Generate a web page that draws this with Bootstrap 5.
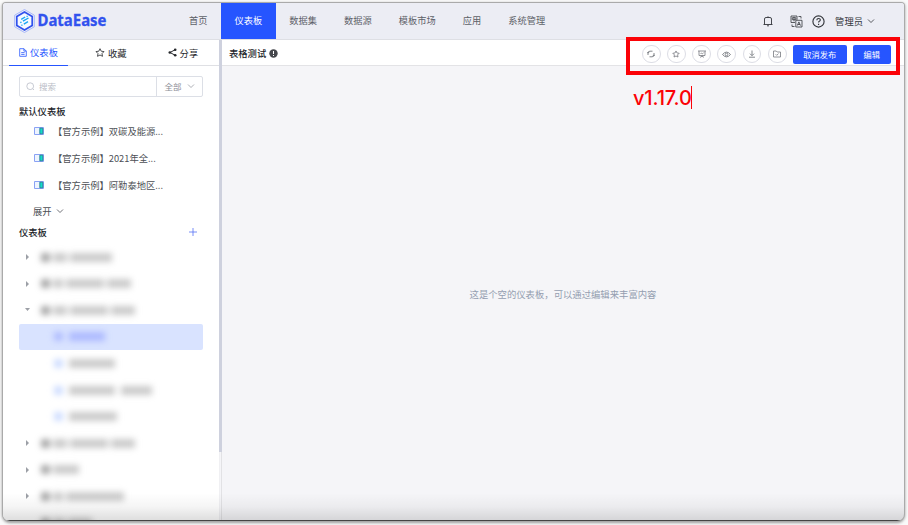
<!DOCTYPE html>
<html lang="en">
<head>
<meta charset="utf-8">
<title>DataEase</title>
<link rel="stylesheet" href="https://cdn.jsdelivr.net/npm/bootstrap@5.3.0/dist/css/bootstrap.min.css">
<style>
body{height:525px;overflow:hidden;background:#fafafa;padding:3px 4px 4px 3px;font:9.3px/14px "Noto Sans CJK SC",sans-serif;color:#4c4f55}
svg{display:block;flex:none;fill:none;stroke:currentColor}
.window{height:518px;border-radius:3px 3px 7px 7px;box-shadow:0 0 0 1px #aaa,0 1px 3px 1px #999;overflow:hidden;background:#f5f5f8}
.window::after{content:"";position:absolute;left:0;right:0;bottom:0;height:28px;background:linear-gradient(transparent,rgba(0,0,0,.04) 50%,rgba(0,0,0,.13));border-bottom:1px solid #444}
.topbar{height:37px;background:#ecedf4;border-bottom:1px solid #dedfe4}
.brand{width:180px;padding-left:11px}
.brand svg{overflow:visible}
.topbar .nav{margin-left:-7.5px}
.topbar .nav-link{padding:0 13.55px;height:36px;line-height:35px;color:#5d6168;font-size:9.23px;border-radius:0}
.topbar .nav-link.active{background:#2655ff;color:#fff}
.tools{color:#33363b;padding-right:29px}
.side{width:219px;background:#fff;border-right:3px solid #ced1de}
.side-tail{position:absolute;right:-3px;top:412px;bottom:0;width:3px;background:#f5f5f8;border-left:1px solid #f0f0f3;border-right:1px solid #e2e2e5}
.tabs{height:26px;border-bottom:1px solid #dfe0e4;color:#25272b}
.tabs>div{height:26px;padding-bottom:1px;gap:3px}
.tabs .on{width:59px;margin-left:6px;color:#2655ff;border-bottom:1px solid #2655ff}
.find{margin:10px 16px 0;height:21px;border:1px solid #dcdfe6;border-radius:2px;color:#b9bdc6;font-size:8.5px}
.find .query{padding:0 0 1px 6px;gap:4px}
.find .scope{width:46px;border-left:1px solid #dcdfe6;color:#8b8e96;gap:5px;padding-bottom:1px}
.heading{color:#202328;font-weight:500;padding-left:16px}
.sample{height:26.7px;padding-left:31px;gap:9px}
.more{padding-left:30px;gap:4px}
.plus{color:#5572f5}
.tree{margin-top:5px}
.tree-row{height:26.6px;padding-left:22px;position:relative}
.arrow{width:5px;color:#9c9fa6}
.smudge{filter:blur(3px);margin-left:11px;gap:3px}
.smudge i{display:block;height:9px;background:#a9a9a9;opacity:.6}
.smudge .dot{width:9px;background:#777;opacity:.7;border-radius:3px}
.kid .smudge{margin-left:24px;gap:6px}
.kid .dot{background:#a9c3ff;opacity:.6}
.chosen{margin:0 16px;padding-left:6px;background:#d9e3ff;border-radius:2px}
.chosen .smudge i{background:#8f9fff}
.titlebar{height:26px;background:#fff;border-bottom:1px solid #e3e3e6;padding:0 13.5px 0 7px;color:#202328}
.titlebar .name{font-weight:500}
.actions{gap:6.5px;padding-top:3px}
.round{width:18.7px;height:18.7px;border:1px solid #dcdde5;border-radius:50%;color:#777a80}
.act{height:19px;background:#2655ff;color:#fff;font-size:8.2px;line-height:18px;padding:0;border:0;border-radius:2px}
.act.wide{width:53.5px}
.act.slim{width:37.5px}
.callout{position:absolute;left:626px;top:37px;width:274px;height:38px;border:4px solid #fb0207}
.version{position:absolute;left:633px;top:86px;height:23px;font:500 20px/24px Inter,sans-serif;color:#fb0207;border-right:1px solid #fb0207;letter-spacing:-.15px;width:58.5px;white-space:nowrap}
.empty{color:#949eb0;padding-bottom:14px;font-size:9.35px}
</style>
<script src="https://cdn.jsdelivr.net/npm/bootstrap@5.3.0/dist/js/bootstrap.bundle.min.js"></script>
</head>
<body>
<div class="window position-relative d-flex flex-column">
<header class="topbar d-flex flex-shrink-0">
 <div class="brand d-flex align-items-center flex-shrink-0">
  <svg width="100" height="28" viewBox="0 -1.5 100 28">
   <path d="M10.5 1 20.3 6.7v11.6l-9.8 5.7L.7 18.3V6.7z" stroke="#a8b8fb"/>
   <path d="M10.5 3.5 18.2 8v9l-7.7 4.5L2.8 17V8z" fill="#f6f9ff" style="stroke:#3152ee;stroke-width:1.7"/>
   <path d="m7.2 10.8 4-2.3M12.6 8.2l1-.6M6.3 14.2l1.2-.7m1.4-.8 5.6-3.2M7.4 17l1-.6m1.4-.8 4.2-2.4" style="stroke:#18a5f5;stroke-width:1.4"/>
   <text x="23.5" y="17.6" textLength="69" lengthAdjust="spacingAndGlyphs" font-family="Noto Sans" font-weight="700" font-size="16.3" fill="#3152ee" style="stroke:#3152ee;stroke-width:.3">DataEase</text>
  </svg>
 </div>
 <nav class="nav nav-pills flex-nowrap flex-grow-1">
  <a class="nav-link">首页</a><a class="nav-link active">仪表板</a><a class="nav-link">数据集</a><a class="nav-link">数据源</a><a class="nav-link">模板市场</a><a class="nav-link">应用</a><a class="nav-link">系统管理</a>
 </nav>
 <div class="tools d-flex align-items-center">
  <svg width="10" height="12" viewBox="0 0 10 12" stroke-width=".9"><path d="M.5 9.5h9M1.5 9.5V4Q1.5 2.5 3 2.5h4Q8.5 2.5 8.5 4v5.5M5 1.3v1.2M4 10.8h2"/></svg>
  <svg style="margin-left:17px" width="13" height="13" viewBox="0 0 13 13" stroke-width=".8"><path d="M7 4.8V1H1v6.5h4M2.3 2.7h3.5v2H2.3zM4 1.8v4.5M5.8 5.3H12V12H5.8zM7.3 10.6l1.6-3.7 1.6 3.7M7.8 9.5H10M8.5 1.5H11v2M4.5 11.5H2v-2"/></svg>
  <svg style="margin-left:9.5px" width="13" height="13" viewBox="0 0 13 13" stroke-width="1.15"><circle cx="6.5" cy="6.5" r="5.6"/><path d="M4.8 5.2q.1-1.7 1.8-1.7t1.7 1.5q0 .8-1 1.3-.7.4-.7 1.3M6.6 8.8V10"/></svg>
  <span style="margin-left:10px">管理员</span>
  <svg class="ms-1" width="8" height="6" viewBox="0 0 8 6" stroke-width=".8"><path d="m1 1.5 3 3 3-3"/></svg>
 </div>
</header>
<div class="d-flex flex-grow-1">
 <aside class="side position-relative flex-shrink-0">
  <div class="side-tail"></div>
  <div class="tabs d-flex">
   <div class="on d-flex align-items-center justify-content-center"><svg width="8" height="9" viewBox="0 0 8 9" stroke-width=".8"><path d="M.7.7h4.2l2.4 2.4v5.2H.7zM4.9.7v2.4h2.4M2.2 4.6h3.4M2.2 6.4h3.4"/></svg>仪表板</div>
   <div class="d-flex align-items-center" style="margin-left:27px"><svg width="10" height="9" viewBox="0 0 10 9" stroke-width=".8"><path d="m5 .7 1.2 2.5 2.8.4-2 2 .5 2.7L5 7 2.5 8.3l.5-2.7-2-2 2.8-.4z"/></svg>收藏</div>
   <div class="d-flex align-items-center" style="margin-left:41px"><svg width="9" height="9" viewBox="0 0 9 9"><path d="M7 1.8 2 4.5 7 7.2"/><g fill="currentColor" stroke="none"><circle cx="7.2" cy="1.8" r="1.3"/><circle cx="1.8" cy="4.5" r="1.3"/><circle cx="7.2" cy="7.2" r="1.3"/></g></svg>分享</div>
  </div>
  <div class="find d-flex">
   <div class="query d-flex align-items-center flex-grow-1"><svg width="9" height="9" viewBox="0 0 9 9" stroke-width=".8"><circle cx="4.2" cy="4.2" r="3.4"/><path d="M6.7 6.7 8 8"/></svg>搜索</div>
   <div class="scope d-flex align-items-center justify-content-center">全部<svg width="8" height="6" viewBox="0 0 8 6" stroke-width=".7"><path d="m1 1.5 3 3 3-3"/></svg></div>
  </div>
  <div class="heading" style="margin-top:7px">默认仪表板</div>
  <div class="samples">
   <div class="sample d-flex align-items-center"><svg width="10" height="8" viewBox="0 0 10 8"><path d="M.5.5h9v7h-9z" fill="#eef4ff" stroke="#8aa2f5"/><path d="M5.8 1.2h3v5.6h-3z" fill="#12dccb" stroke="#1b7488" stroke-width=".8"/></svg><span>【官方示例】双碳及能源...</span></div>
   <div class="sample d-flex align-items-center"><svg width="10" height="8" viewBox="0 0 10 8"><path d="M.5.5h9v7h-9z" fill="#eef4ff" stroke="#8aa2f5"/><path d="M5.8 1.2h3v5.6h-3z" fill="#12dccb" stroke="#1b7488" stroke-width=".8"/></svg><span>【官方示例】2021年全...</span></div>
   <div class="sample d-flex align-items-center"><svg width="10" height="8" viewBox="0 0 10 8"><path d="M.5.5h9v7h-9z" fill="#eef4ff" stroke="#8aa2f5"/><path d="M5.8 1.2h3v5.6h-3z" fill="#12dccb" stroke="#1b7488" stroke-width=".8"/></svg><span>【官方示例】阿勒泰地区...</span></div>
   <div class="sample more d-flex align-items-center">展开<svg width="8" height="6" viewBox="0 0 8 6" stroke-width=".8"><path d="m1 1.5 3 3 3-3"/></svg></div>
  </div>
  <div class="heading d-flex justify-content-between align-items-center" style="padding-right:22px">仪表板<svg class="plus" width="8" height="8" viewBox="0 0 8 8" stroke-width=".8"><path d="M4 0v8M0 4h8"/></svg></div>
  <div class="tree"></div>
 </aside>
 <main class="flex-grow-1 d-flex flex-column">
  <div class="titlebar d-flex align-items-center flex-shrink-0">
   <span class="name">表格测试</span>
   <svg style="margin:1px 0 0 3px" width="9" height="9" viewBox="0 0 9 9"><circle cx="4.5" cy="4.5" r="4.2" fill="#45474c" stroke="none"/><path d="M4.5 2v3M4.5 6v1" stroke="#fff" style="stroke:#fff"/></svg>
   <div class="actions d-flex align-items-center ms-auto">
    <span class="round d-flex align-items-center justify-content-center"><svg width="8" height="8" viewBox="0 0 8 8" stroke-width=".9"><path d="M1 5V3q0-1.8 2-1.8h2.5M2.5 6.8H5q2 0 2-1.8V3M.2 2.6h2M5.8 5.4h2"/></svg></span>
    <span class="round d-flex align-items-center justify-content-center"><svg width="8" height="8" viewBox="0 0 10 9"><path d="m5 .7 1.2 2.5 2.8.4-2 2 .5 2.7L5 7 2.5 8.3l.5-2.7-2-2 2.8-.4z"/></svg></span>
    <span class="round d-flex align-items-center justify-content-center"><svg width="8" height="8" viewBox="0 0 8 8" stroke-width=".8"><path d="M0 1h8M1 1v4.5h6V1M4 5.5v1M2 7.3l2-1 2 1M2.5 4l1-1 1 .8L5.8 2.5"/></svg></span>
    <span class="round d-flex align-items-center justify-content-center"><svg width="9" height="7" viewBox="0 0 9 7" stroke-width=".9"><path d="M.5 3.5Q4.5-1.3 8.5 3.5 4.5 8.3.5 3.5z"/><circle cx="4.5" cy="3.5" r="1.3"/></svg></span>
    <span class="round d-flex align-items-center justify-content-center"><svg width="8" height="8" viewBox="0 0 8 8" stroke-width=".9"><path d="M4 .5v5M2 3.7l2 2 2-2M1 7.2h6"/></svg></span>
    <span class="round d-flex align-items-center justify-content-center"><svg width="8" height="8" viewBox="0 0 8 8" stroke-width=".8"><path d="M.5 1h2.7l1 1h3.3v5h-7zM2.7 4.3l1 1 1.8-1.7"/></svg></span>
    <button class="btn act wide">取消发布</button>
    <button class="btn act slim">编辑</button>
   </div>
  </div>
  <div class="empty flex-grow-1 d-flex align-items-center justify-content-center">这是个空的仪表板，可以通过编辑来丰富内容</div>
 </main>
</div>
</div>
<div class="callout"></div>
<div class="version">v1.17.0</div>
<script>
const rows=[["r",[14,42]],["r",[10,38,24]],["d",[14,38,24]],["c",[36]],["k",[46]],["k",[46,31]],["k",[48]],["r",[14,38,24]],["r",[26]],["r",[10,58]],["r",[12,24]]];
const paths={r:"M1 0 4 3 1 6z",d:"M0 1h5L2.5 4z"};
document.querySelector(".tree").innerHTML=rows.map(([t,w])=>
 `<div class="tree-row d-flex align-items-center ${t=="k"?"kid":t=="c"?"kid chosen":""}"><svg class="arrow" width="5" height="6" viewBox="0 0 5 6">${paths[t]?`<path d="${paths[t]}" fill="currentColor" stroke="none"/>`:""}</svg><div class="smudge d-flex"><i class="dot"></i>${w.map(n=>`<i style="width:${n}px"></i>`).join("")}</div></div>`).join("");
</script>
</body>
</html>
